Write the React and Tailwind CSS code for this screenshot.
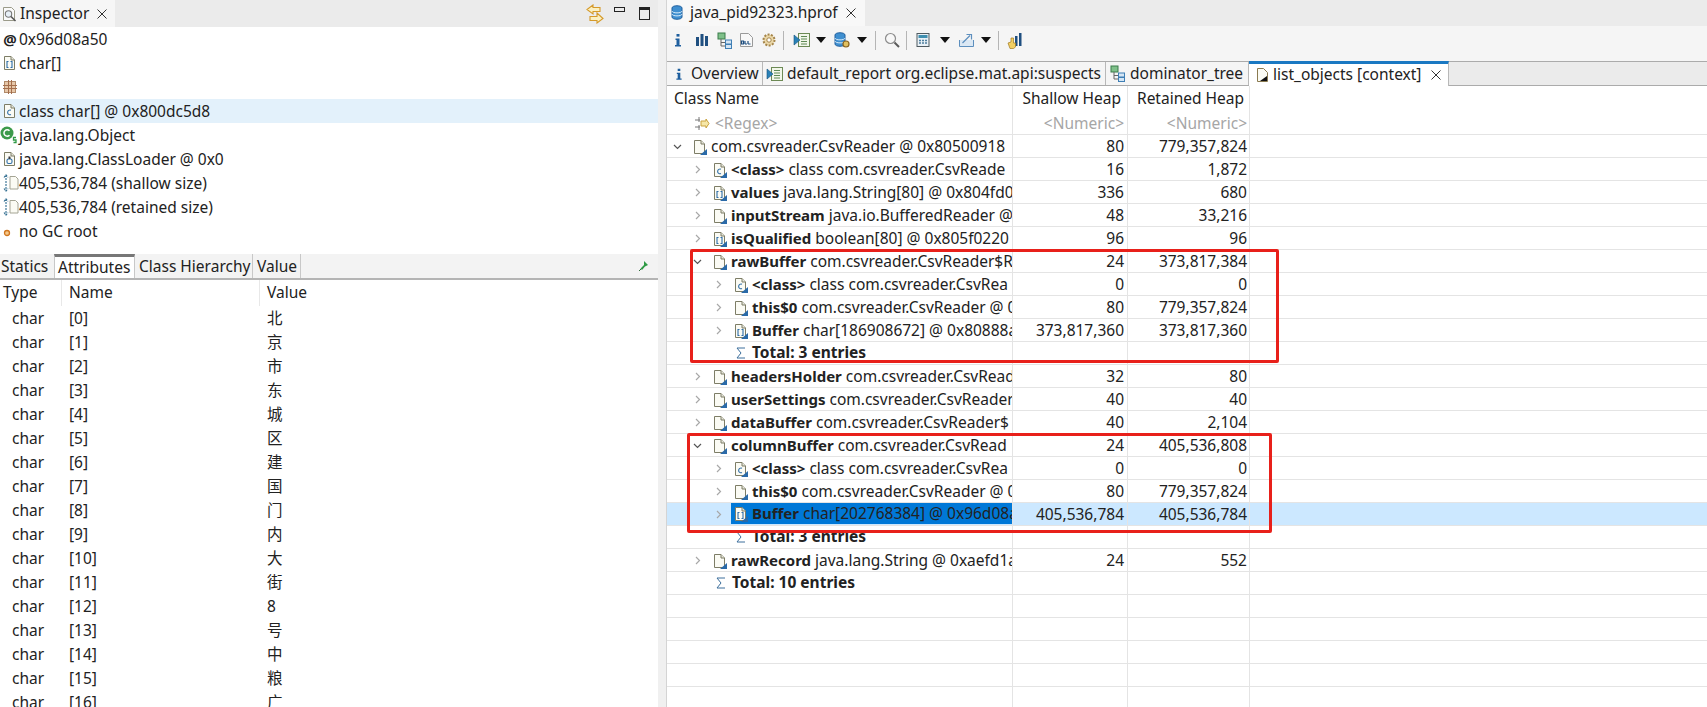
import React from "react";

const FONT = "font-['Noto_Sans','Noto_Sans_CJK_SC',sans-serif]";

function Page({ kind, corner = true, fold = "#7d7d66" }) {
  return (
    <svg width="14" height="16" viewBox="0 0 14 16" className="shrink-0">
      <path d="M1.5 1.5h6.5l3.5 3.5v9.5h-10z" fill="#fbfbf4" stroke={fold} />
      <path d="M8 1.5v3.5h3.5" fill="#e8e8dc" stroke={fold} />
      {kind === "c" && <path d="M8 7.2a2.4 2.4 0 1 0 0 4.4" fill="none" stroke="#2f6ea8" strokeWidth="1.1" />}
      {kind === "arr" && <path d="M5.5 6.5h-1.5v6h1.5M7.5 6.5h1.5v6h-1.5" fill="none" stroke="#2f6ea8" strokeWidth="1.1" />}
      {kind === "loader" && (
        <g>
          <rect x="4" y="8" width="5" height="4.5" rx="1.5" fill="none" stroke="#2f6ea8" strokeWidth="1.1" />
          <rect x="5.5" y="5.5" width="2" height="2.5" fill="#3a3a3a" />
        </g>
      )}
      {corner && <path d="M14 10v6h-7z" fill="#2a6aa8" />}
    </svg>
  );
}

function SizeIcon() {
  return (
    <svg width="16" height="18" viewBox="0 0 16 18" className="shrink-0">
      <path d="M3 1v16M1 3.5L3 1l2 2.5M1 14.5L3 17l2-2.5" fill="none" stroke="#2f6c8f" strokeWidth="1.1" strokeDasharray="2 1" />
      <path d="M7 2.5h5.5l2.5 2.5v10h-8z" fill="#fbfbf4" stroke="#a4a494" />
    </svg>
  );
}

function Close() {
  return (
    <svg width="10" height="10" viewBox="0 0 10 10" className="shrink-0">
      <path d="M.5.5l9 9M9.5.5l-9 9" stroke="#333" strokeWidth="1" />
    </svg>
  );
}

function Sigma() {
  return (
    <svg width="10" height="12" viewBox="0 0 10 12" className="shrink-0">
      <path d="M9 1H1l4 5-4 5h8" fill="none" stroke="#3c6f9c" strokeWidth="1" />
    </svg>
  );
}

function Chevron({ open }) {
  return (
    <svg width="11" height="11" viewBox="0 0 11 11" className="shrink-0">
      {open ? (
        <path d="M2 4l3.5 3.5L9 4" fill="none" stroke="#555" strokeWidth="1.2" />
      ) : (
        <path d="M4 2l3.5 3.5L4 9" fill="none" stroke="#a8a8a8" strokeWidth="1.2" />
      )}
    </svg>
  );
}

function InfoI({ size = 16 }) {
  return (
    <svg width={size} height={size} viewBox="0 0 16 16" className="shrink-0">
      <rect x="6.5" y="2" width="3" height="2.6" fill="#1f5f9e" />
      <path d="M5.5 6.5h4v6.5h1.5v1.5h-6V13h1.5V8H5.5z" fill="#1f5f9e" />
    </svg>
  );
}

function TreeIcon() {
  return (
    <svg width="16" height="17" viewBox="0 0 16 17" className="shrink-0">
      <rect x="1" y="1" width="7" height="6" fill="#7fc08a" stroke="#3a7d4a" />
      <path d="M4 7v7h4M4 10.5h4" fill="none" stroke="#666" />
      <rect x="8.5" y="8" width="6" height="4" fill="#d5e6f5" stroke="#3f7fb5" />
      <rect x="8.5" y="12.5" width="6" height="4" fill="#d5e6f5" stroke="#3f7fb5" />
    </svg>
  );
}

function ReportIcon() {
  return (
    <svg width="17" height="16" viewBox="0 0 17 16" className="shrink-0">
      <rect x="5.5" y="1.5" width="11" height="13" fill="#f2f7ea" stroke="#6d8a55" />
      <path d="M8 4.5h6M8 7h6M8 9.5h6M8 12h6" stroke="#5f8a55" />
      <path d="M1 3l6 5-6 5z" fill="#2a82b8" stroke="#15537c" strokeWidth=".6" />
    </svg>
  );
}

function DbIcon({ gear = true, size = 16 }) {
  return (
    <svg width={size} height={size} viewBox="0 0 16 16" className="shrink-0">
      <path d="M1 3c0-3 10-3 10 0v9c0 3-10 3-10 0z" fill="#3f8fd0" stroke="#1f5f9e" />
      <path d="M1 6c0 2.500 10 2.500 10 0M1 9c0 2.500 10 2.500 10 0" fill="none" stroke="#d8ecfa" />
      {gear && <circle cx="12" cy="12" r="3" fill="#e0c060" stroke="#8a6420" strokeWidth="1.2" />}
    </svg>
  );
}

function Dropdown() {
  return (
    <svg width="10" height="6" viewBox="0 0 10 6" className="shrink-0">
      <path d="M0 0h10L5 6z" fill="#111" />
    </svg>
  );
}

function Sep({ className = "" }) {
  return <div className={"h-[19px] w-px bg-[#b5b5b5] shrink-0 " + className} />;
}

function Toolbar() {
  return (
    <div className="flex h-[35px] shrink-0 items-center bg-[#f5f5f5] pb-[7px] pl-[3px]">
      <InfoI />
      <svg width="16" height="14" viewBox="0 0 16 14" className="ml-[8px] shrink-0">
        <path d="M2 4h3v9H2zM6.500 1h3v12h-3zM11 3h3v10h-3z" fill="#1f4f80" />
      </svg>
      <div className="ml-[7px]"><TreeIcon /></div>
      <svg width="15" height="16" viewBox="0 0 15 16" className="ml-[6px] shrink-0">
        <path d="M1.500 1.500h8l4 4v9h-12z" fill="#f8f8f8" stroke="#9a9a9a" />
        <path d="M2.500 9h2v3h-2zM6 9v3M9 9v3" fill="none" stroke="#1f4f80" strokeWidth="1.200" />
        <path d="M6 12h2M9 12h2.500" stroke="#1f4f80" />
      </svg>
      <svg width="16" height="16" viewBox="0 0 16 16" className="ml-[7px] shrink-0">
        <circle cx="8" cy="8" r="5.500" fill="#ead7a8" stroke="#a5854a" strokeWidth="2" strokeDasharray="2 1.400" />
        <circle cx="8" cy="8" r="2.200" fill="#fff" stroke="#a5854a" />
      </svg>
      <Sep className="ml-[6px]" />
      <div className="ml-[9px]"><ReportIcon /></div>
      <div className="ml-[6px]"><Dropdown /></div>
      <div className="ml-[8px]"><DbIcon /></div>
      <div className="ml-[7px]"><Dropdown /></div>
      <Sep className="ml-[8px]" />
      <svg width="16" height="16" viewBox="0 0 16 16" className="ml-[8px] shrink-0">
        <circle cx="6.500" cy="6.500" r="5" fill="#f7f7f7" stroke="#8c8c8c" strokeWidth="1.200" />
        <path d="M10.500 10.500l4.500 4.500" stroke="#5a5a5a" strokeWidth="2" />
      </svg>
      <Sep className="ml-[6px]" />
      <svg width="16" height="16" viewBox="0 0 16 16" className="ml-[8px] shrink-0">
        <rect x="2" y="1.500" width="12" height="13" fill="#e8f0f6" stroke="#4f5a60" />
        <rect x="3.500" y="3" width="9" height="3" fill="#3f8fb0" />
        <path d="M4 8.500h2M7 8.500h2M10 8.500h2M4 11h2M7 11h2M10 11h2" stroke="#4f7f9f" strokeWidth="1.400" />
      </svg>
      <div className="ml-[9px]"><Dropdown /></div>
      <svg width="17" height="16" viewBox="0 0 17 16" className="ml-[8px] shrink-0">
        <path d="M1.500 8v6.500h14V8" fill="#dbe8f4" stroke="#5d8fbe" />
        <path d="M4.500 11L12 3.500M8.500 2.500h5v5" fill="none" stroke="#5d8fbe" strokeWidth="1.200" />
      </svg>
      <div className="ml-[6px]"><Dropdown /></div>
      <Sep className="ml-[7px]" />
      <svg width="16" height="17" viewBox="0 0 16 17" className="ml-[8px] shrink-0">
        <path d="M8 4h2.500v10H8zM12 1h2.500v13H12z" fill="#1f4f80" />
        <path d="M1 11l3-1V6h2.500v5h2v4l-2 1.500H3z" fill="#f2cf63" stroke="#a07a20" strokeWidth=".7" />
      </svg>
    </div>
  );
}

const INSPECT = [
  { icon: <span className="w-[14px] text-[15px] font-bold text-center text-[#222] leading-none">@</span>, text: "0x96d08a50" },
  { icon: <Page kind="arr" corner={false} />, text: "char[]" },
  {
    icon: (
      <svg width="14" height="14" viewBox="0 0 14 14" className="shrink-0">
        <rect x="1.500" y="1.500" width="11" height="11" fill="#e7c7a8" stroke="#b08a6a" />
        <path d="M5.500 0v14M8.500 0v14M0 5.500h14M0 8.500h14" stroke="#a56f4d" />
      </svg>
    ),
    text: "",
  },
  { icon: <Page kind="c" corner={false} />, text: "class char[] @ 0x800dc5d8", selected: true },
  {
    icon: (
      <svg width="18" height="18" viewBox="0 0 18 18" className="shrink-0 -ml-[3px] -mr-px">
        <circle cx="7" cy="7" r="6.500" fill="#3c9a4a" />
        <path d="M9.500 4.800a3.200 3.200 0 1 0 0 4.400" fill="none" stroke="#fff" strokeWidth="1.500" />
        <path d="M16 11.500h-2.500v2.500H16v2.500h-2.500" fill="none" stroke="#2f9a45" strokeWidth="1.300" />
      </svg>
    ),
    text: "java.lang.Object",
  },
  { icon: <Page kind="loader" corner={false} />, text: "java.lang.ClassLoader @ 0x0" },
  { icon: <SizeIcon />, text: "405,536,784 (shallow size)" },
  { icon: <SizeIcon />, text: "405,536,784 (retained size)" },
  {
    icon: (
      <svg width="14" height="14" viewBox="0 0 14 14" className="shrink-0">
        <circle cx="4" cy="9" r="2.500" fill="#f6c98a" stroke="#d0761f" strokeWidth="1.300" />
      </svg>
    ),
    text: "no GC root",
  },
];

const CHARS = "北京市东城区建国门内大街8号中粮广".split("");

function LeftPanel() {
  return (
    <div className="flex w-[658px] shrink-0 flex-col overflow-hidden bg-white">
      <div className="flex h-[27px] shrink-0 items-stretch justify-between bg-[#ebebeb]">
        <div className="flex w-[115px] items-center bg-[#f6f6f6] pl-[2px]">
          <svg width="15" height="16" viewBox="0 0 15 16" className="shrink-0">
            <path d="M1.500 1.500h8l3 3v10h-11z" fill="#fafafa" stroke="#9b9b8a" />
            <circle cx="6.500" cy="8" r="3.200" fill="#e8f0f7" stroke="#777" strokeWidth="1.100" />
            <path d="M9 10.500l4.500 4.500" stroke="#555" strokeWidth="1.600" />
          </svg>
          <span className="ml-[3px] text-[15.500px] text-[#222]">Inspector</span>
          <div className="ml-[8px]"><Close /></div>
        </div>
        <div className="flex items-center pr-[8px]">
          <svg width="18" height="20" viewBox="0 0 18 20" className="shrink-0">
            <path d="M7 1L1 5.500 7 10V7.500h7v-4H7zM11 9l6 5.500L11 19v-2.500H4v-4h7z" fill="#fbf0c2" stroke="#d59a2a" strokeWidth="1.100" />
          </svg>
          <div className="ml-[10px] mb-[8px] h-[5px] w-[11px] border border-[#222]" />
          <div className="ml-[14px] h-[13px] w-[11px] border border-[#222] border-t-[3px]" />
        </div>
      </div>
      <div className="flex shrink-0 flex-col">
        {INSPECT.map((r, i) => (
          <div key={i} className={"flex h-[24px] shrink-0 items-center pl-[3px] " + (r.selected ? "bg-[#e3f1fb]" : "")}>
            <div className="flex w-[16px] shrink-0 items-center">{r.icon}</div>
            <span className="pt-[2px] text-[15.500px] text-[#222] whitespace-nowrap">{r.text}</span>
          </div>
        ))}
      </div>
      <div className="mt-[11px] flex h-[26px] shrink-0 items-stretch justify-between border-b-2 border-[#b4b4b4] bg-[#f3f3f3]">
        <div className="flex items-stretch pt-0 text-[15.500px] text-[#222]">
          <div className="flex w-[54px] items-center pl-[1px] pt-[2px]">Statics</div>
          <div className="flex w-[81px] items-center border-t-[3px] border-x border-t-[#777] border-x-[#c8c8c8] bg-white pl-[3px]">Attributes</div>
          <div className="flex w-[118px] items-center border-r border-[#c8c8c8] pl-[4px] pt-[2px] whitespace-nowrap">Class Hierarchy</div>
          <div className="flex w-[48px] items-center border-r border-[#c8c8c8] pl-[4px] pt-[2px]">Value</div>
        </div>
        <div className="flex items-center pr-[9px]">
          <svg width="11" height="12" viewBox="0 0 11 12">
            <path d="M6 1l4 4-3 1.500L4 10l-1.500-1.500L6 5z" fill="#2f9a45" />
            <path d="M3 9l-2 2" stroke="#2f6a3a" />
          </svg>
        </div>
      </div>
      <div className="grid h-[26px] shrink-0 grid-cols-[62px_198px_1fr] text-[15.500px] text-[#222]">
        <div className="flex items-center border-r border-[#e8e8e8] pl-[3px]">Type</div>
        <div className="flex items-center border-r border-[#e8e8e8] pl-[7px]">Name</div>
        <div className="flex items-center pl-[7px]">Value</div>
      </div>
      {CHARS.map((c, i) => (
        <div key={i} className="grid h-[24px] shrink-0 grid-cols-[62px_198px_1fr] items-center pt-[1px] text-[15.500px] text-[#222]">
          <div className="pl-[12px]">char</div>
          <div className="pl-[7px]">[{i}]</div>
          <div className="pl-[7px]">{c}</div>
        </div>
      ))}
    </div>
  );
}

const ROWS = [
  { l: 0, open: true, icon: "doc", rest: "com.csvreader.CsvReader @ 0x80500918", s: "80", r: "779,357,824" },
  { l: 1, icon: "c", name: "<class>", rest: "class com.csvreader.CsvReade", s: "16", r: "1,872" },
  { l: 1, icon: "arr", name: "values", rest: "java.lang.String[80] @ 0x804fd0", s: "336", r: "680" },
  { l: 1, icon: "doc", name: "inputStream", rest: "java.io.BufferedReader @", s: "48", r: "33,216" },
  { l: 1, icon: "arr", name: "isQualified", rest: "boolean[80] @ 0x805f0220", s: "96", r: "96" },
  { l: 1, open: true, icon: "doc", name: "rawBuffer", rest: "com.csvreader.CsvReader$R", s: "24", r: "373,817,384" },
  { l: 2, icon: "c", name: "<class>", rest: "class com.csvreader.CsvRea", s: "0", r: "0" },
  { l: 2, icon: "doc", name: "this$0", rest: "com.csvreader.CsvReader @ 0", s: "80", r: "779,357,824" },
  { l: 2, icon: "arr", name: "Buffer", rest: "char[186908672] @ 0x80888a", s: "373,817,360", r: "373,817,360" },
  { l: 2, total: "Total: 3 entries" },
  { l: 1, icon: "doc", name: "headersHolder", rest: "com.csvreader.CsvRead", s: "32", r: "80" },
  { l: 1, icon: "doc", name: "userSettings", rest: "com.csvreader.CsvReader", s: "40", r: "40" },
  { l: 1, icon: "doc", name: "dataBuffer", rest: "com.csvreader.CsvReader$", s: "40", r: "2,104" },
  { l: 1, open: true, icon: "doc", name: "columnBuffer", rest: "com.csvreader.CsvRead", s: "24", r: "405,536,808" },
  { l: 2, icon: "c", name: "<class>", rest: "class com.csvreader.CsvRea", s: "0", r: "0" },
  { l: 2, icon: "doc", name: "this$0", rest: "com.csvreader.CsvReader @ 0", s: "80", r: "779,357,824" },
  { l: 2, icon: "arr", name: "Buffer", rest: "char[202768384] @ 0x96d08a", s: "405,536,784", r: "405,536,784", selected: true },
  { l: 2, total: "Total: 3 entries" },
  { l: 1, icon: "doc", name: "rawRecord", rest: "java.lang.String @ 0xaefd1a", s: "24", r: "552" },
  { l: 1, total: "Total: 10 entries" },
  {},
  {},
  {},
  {},
  {},
];

const PAD = ["pl-[5px]", "pl-[25px]", "pl-[46px]"];
const TOTAL_PAD = { 1: "pl-[49px]", 2: "pl-[69px]" };
const GRID = "grid grid-cols-[346px_115px_122px_1fr]";
const CELL = "border-r border-[#e4e4e4]";

function Label({ row }) {
  return (
    <>
      <Page kind={row.icon} />
      <span className="ml-[4px] text-[15px] font-bold text-[#222] whitespace-nowrap">{row.name}</span>
      <span className={(row.name ? "ml-[4px] " : "") + "text-[15.500px] text-[#222] whitespace-nowrap"}>{row.rest}</span>
    </>
  );
}

function TreeRow({ row }) {
  const hasData = row.s !== undefined;
  return (
    <div className={GRID + " h-[23px] shrink-0 border-b border-[#e4e4e4] " + (row.selected ? "bg-[#cce8ff]" : "")}>
      {row.total ? (
        <div className={"flex items-center overflow-hidden " + CELL + " " + TOTAL_PAD[row.l]}>
          <Sigma />
          <span className="ml-[6px] text-[15.500px] font-bold text-[#222] whitespace-nowrap">{row.total}</span>
        </div>
      ) : hasData ? (
        <div className={"flex items-center overflow-hidden " + CELL + " " + PAD[row.l]}>
          <Chevron open={row.open} />
          {row.selected ? (
            <div className="ml-[7px] flex h-[21px] flex-1 items-center self-start overflow-hidden bg-[#0078d7] pl-[3px]">
              <Label row={row} />
            </div>
          ) : (
            <div className="ml-[10px] flex items-center">
              <Label row={row} />
            </div>
          )}
        </div>
      ) : (
        <div className={CELL} />
      )}
      <div className={"flex items-center justify-end pr-[3px] text-[15.500px] text-[#222] whitespace-nowrap " + CELL}>{row.s}</div>
      <div className={"flex items-center justify-end pr-[2px] text-[15.500px] text-[#222] whitespace-nowrap " + CELL}>{row.r}</div>
      <div />
    </div>
  );
}

function RightPanel() {
  return (
    <div className="flex min-w-0 flex-1 flex-col overflow-hidden border-l border-[#d4d4d4] bg-white">
      <div className="flex h-[26px] shrink-0 bg-[#ebebeb]">
        <div className="flex w-[198px] items-center bg-[#f8f8f8] pl-[4px]">
          <DbIcon gear={false} />
          <span className="ml-[3px] text-[15.500px] text-[#222]">java_pid92323.hprof</span>
          <div className="ml-[8px]"><Close /></div>
        </div>
      </div>
      <Toolbar />
      <div className="flex h-[25px] shrink-0 items-stretch border-y border-[#ababab] bg-[#ebebeb] text-[15.500px] text-[#222]">
        <div className="flex w-[96px] items-center border-r border-[#b8b8b8] bg-[#f5f5f5] pl-[5px]">
          <InfoI size={14} />
          <span className="ml-[5px]">Overview</span>
        </div>
        <div className="flex w-[343px] items-center border-r border-[#b8b8b8] bg-[#f5f5f5] pl-[3px]">
          <ReportIcon />
          <span className="ml-[4px] whitespace-nowrap">default_report org.eclipse.mat.api:suspects</span>
        </div>
        <div className="flex w-[143px] items-center border-r border-[#b8b8b8] bg-[#f5f5f5] pl-[4px]">
          <TreeIcon />
          <span className="ml-[4px]">dominator_tree</span>
        </div>
        <div className="-mt-px -mb-px flex w-[200px] items-center border-t-[3px] border-r border-t-[#1a78c2] border-r-[#b8b8b8] bg-white pl-[7px]">
          <svg width="13" height="16" viewBox="0 0 13 16" className="shrink-0">
            <path d="M1.500 1.500h6l4 4v9h-10z" fill="#fbfbf4" stroke="#8a7a50" />
            <path d="M11 9v5H4z" fill="#111" />
          </svg>
          <span className="ml-[4px] whitespace-nowrap">list_objects [context]</span>
          <div className="ml-[10px]"><Close /></div>
        </div>
      </div>
      <div className={GRID + " h-[26px] shrink-0 text-[15.500px] text-[#222]"}>
        <div className={"flex items-center pl-[7px] " + CELL}>Class Name</div>
        <div className={"flex items-center justify-end pr-[6px] " + CELL}>Shallow Heap</div>
        <div className={"flex items-center justify-end pr-[5px] " + CELL}>Retained Heap</div>
        <div />
      </div>
      <div className={GRID + " h-[23px] shrink-0 border-b border-[#e4e4e4] text-[15.500px] text-[#a6a6a6]"}>
        <div className={"flex items-center pl-[27px] " + CELL}>
          <svg width="16" height="16" viewBox="0 0 16 16" className="shrink-0">
            <path d="M1 4h5M1 11h5M5 1v5M5 9v5" stroke="#777" fill="none" />
            <path d="M7 5h5V3l3 4.500-3 4.500v-2H7z" fill="#f6e7a8" stroke="#c9a23c" />
          </svg>
          <span className="ml-[5px]">&lt;Regex&gt;</span>
        </div>
        <div className={"flex items-center justify-end pr-[3px] " + CELL}>&lt;Numeric&gt;</div>
        <div className={"flex items-center justify-end pr-[2px] " + CELL}>&lt;Numeric&gt;</div>
        <div />
      </div>
      {ROWS.map((r, i) => (
        <TreeRow key={i} row={r} />
      ))}
    </div>
  );
}

export default function App() {
  return (
    <div className={"relative flex h-[707px] w-[1707px] overflow-hidden bg-white " + FONT}>
      <LeftPanel />
      <div className="w-[8px] shrink-0 bg-[#f0f0f0]" />
      <RightPanel />
      <div className="absolute left-[690px] top-[249px] h-[114px] w-[589px] rounded-[2px] border-[3px] border-[#e8201a]" />
      <div className="absolute left-[687px] top-[433px] h-[100px] w-[585px] rounded-[2px] border-[3px] border-[#e8201a]" />
    </div>
  );
}
